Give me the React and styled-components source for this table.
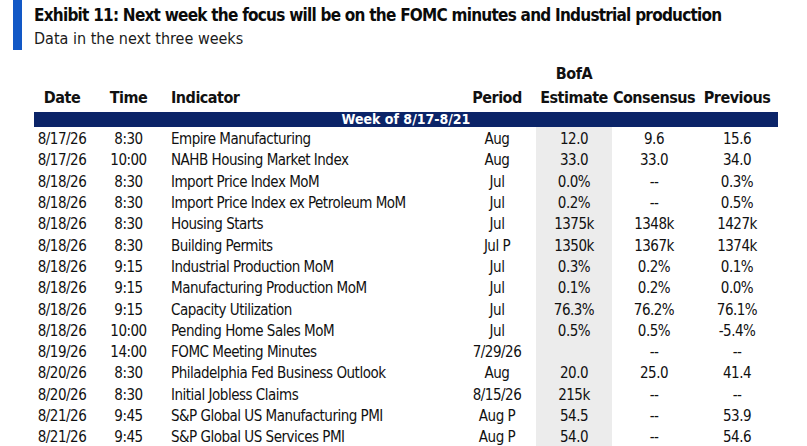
import React from "react";
import styled, { createGlobalStyle } from "styled-components";

const Global = createGlobalStyle`
  html, body { margin: 0; padding: 0; background: #fff; }
  body { font-family: "DejaVu Sans Condensed", "DejaVu Sans", sans-serif; color: #111; }
`;

const Page = styled.div`
  width: 807px;
  height: 446px;
  overflow: hidden;
`;

const Heading = styled.header`
  display: flex;
  align-items: stretch;
  padding-left: 13px;
  height: 50px;
`;

const Accent = styled.div`
  width: 9px;
  background: #1258c6;
  flex: none;
`;

const HeadingText = styled.div`
  margin-left: 12px;
  display: flex;
  flex-direction: column;
  padding-top: 3px;
`;

const Title = styled.h1`
  margin: 0;
  font-size: 17px;
  line-height: 24px;
  font-weight: 700;
  letter-spacing: -0.76px;
  color: #0b0b0b;
  white-space: nowrap;
`;

const Subtitle = styled.div`
  font-size: 16px;
  line-height: 24px;
  color: #1a1a1a;
`;

const Table = styled.table`
  margin: 12px 0 0 34px;
  width: 744px;
  border-collapse: collapse;
  table-layout: fixed;
`;

const HeadCell = styled.th`
  font-size: 16px;
  line-height: 24px;
  font-weight: 700;
  letter-spacing: -0.5px;
  text-align: ${(p) => p.$align || "center"};
  vertical-align: bottom;
  padding: 0 0 2px ${(p) => (p.$align === "left" ? "4px" : "0")};
  white-space: nowrap;
`;

const BandCell = styled.td`
  background: #0b2468;
  color: #fff;
  font-weight: 700;
  font-size: 14px;
  height: 15px;
  line-height: 15px;
  text-align: center;
  padding: 0;
`;

const Row = styled.tr`
  height: 21.3px;
`;

const Cell = styled.td`
  font-size: 15px;
  line-height: 17px;
  letter-spacing: -0.5px;
  padding: 4px 0 0 ${(p) => (p.$align === "left" ? "4px" : "0")};
  text-align: ${(p) => p.$align || "center"};
  background: ${(p) => (p.$shade ? "#ececec" : "transparent")};
  white-space: nowrap;
  vertical-align: middle;
`;

const rows = [
  ["8/17/26", "8:30", "Empire Manufacturing", "Aug", "12.0", "9.6", "15.6"],
  ["8/17/26", "10:00", "NAHB Housing Market Index", "Aug", "33.0", "33.0", "34.0"],
  ["8/18/26", "8:30", "Import Price Index MoM", "Jul", "0.0%", "--", "0.3%"],
  ["8/18/26", "8:30", "Import Price Index ex Petroleum MoM", "Jul", "0.2%", "--", "0.5%"],
  ["8/18/26", "8:30", "Housing Starts", "Jul", "1375k", "1348k", "1427k"],
  ["8/18/26", "8:30", "Building Permits", "Jul P", "1350k", "1367k", "1374k"],
  ["8/18/26", "9:15", "Industrial Production MoM", "Jul", "0.3%", "0.2%", "0.1%"],
  ["8/18/26", "9:15", "Manufacturing Production MoM", "Jul", "0.1%", "0.2%", "0.0%"],
  ["8/18/26", "9:15", "Capacity Utilization", "Jul", "76.3%", "76.2%", "76.1%"],
  ["8/18/26", "10:00", "Pending Home Sales MoM", "Jul", "0.5%", "0.5%", "-5.4%"],
  ["8/19/26", "14:00", "FOMC Meeting Minutes", "7/29/26", "", "--", "--"],
  ["8/20/26", "8:30", "Philadelphia Fed Business Outlook", "Aug", "20.0", "25.0", "41.4"],
  ["8/20/26", "8:30", "Initial Jobless Claims", "8/15/26", "215k", "--", "--"],
  ["8/21/26", "9:45", "S&P Global US Manufacturing PMI", "Aug P", "54.5", "--", "53.9"],
  ["8/21/26", "9:45", "S&P Global US Services PMI", "Aug P", "54.0", "--", "54.6"],
];

export default function App() {
  return (
    <Page>
      <Global />
      <Heading>
        <Accent />
        <HeadingText>
          <Title>Exhibit 11: Next week the focus will be on the FOMC minutes and Industrial production</Title>
          <Subtitle>Data in the next three weeks</Subtitle>
        </HeadingText>
      </Heading>
      <Table>
        <colgroup>
          <col style={{ width: 56 }} />
          <col style={{ width: 77 }} />
          <col style={{ width: 291 }} />
          <col style={{ width: 78 }} />
          <col style={{ width: 76 }} />
          <col style={{ width: 84 }} />
          <col style={{ width: 82 }} />
        </colgroup>
        <thead>
          <tr>
            <HeadCell>Date</HeadCell>
            <HeadCell>Time</HeadCell>
            <HeadCell $align="left">Indicator</HeadCell>
            <HeadCell>Period</HeadCell>
            <HeadCell>BofA<br />Estimate</HeadCell>
            <HeadCell>Consensus</HeadCell>
            <HeadCell>Previous</HeadCell>
          </tr>
        </thead>
        <tbody>
          <tr>
            <BandCell colSpan={7}>Week of 8/17-8/21</BandCell>
          </tr>
          {rows.map((r, i) => (
            <Row key={i}>
              <Cell>{r[0]}</Cell>
              <Cell>{r[1]}</Cell>
              <Cell $align="left">{r[2]}</Cell>
              <Cell>{r[3]}</Cell>
              <Cell $shade>{r[4]}</Cell>
              <Cell>{r[5]}</Cell>
              <Cell>{r[6]}</Cell>
            </Row>
          ))}
        </tbody>
      </Table>
    </Page>
  );
}
